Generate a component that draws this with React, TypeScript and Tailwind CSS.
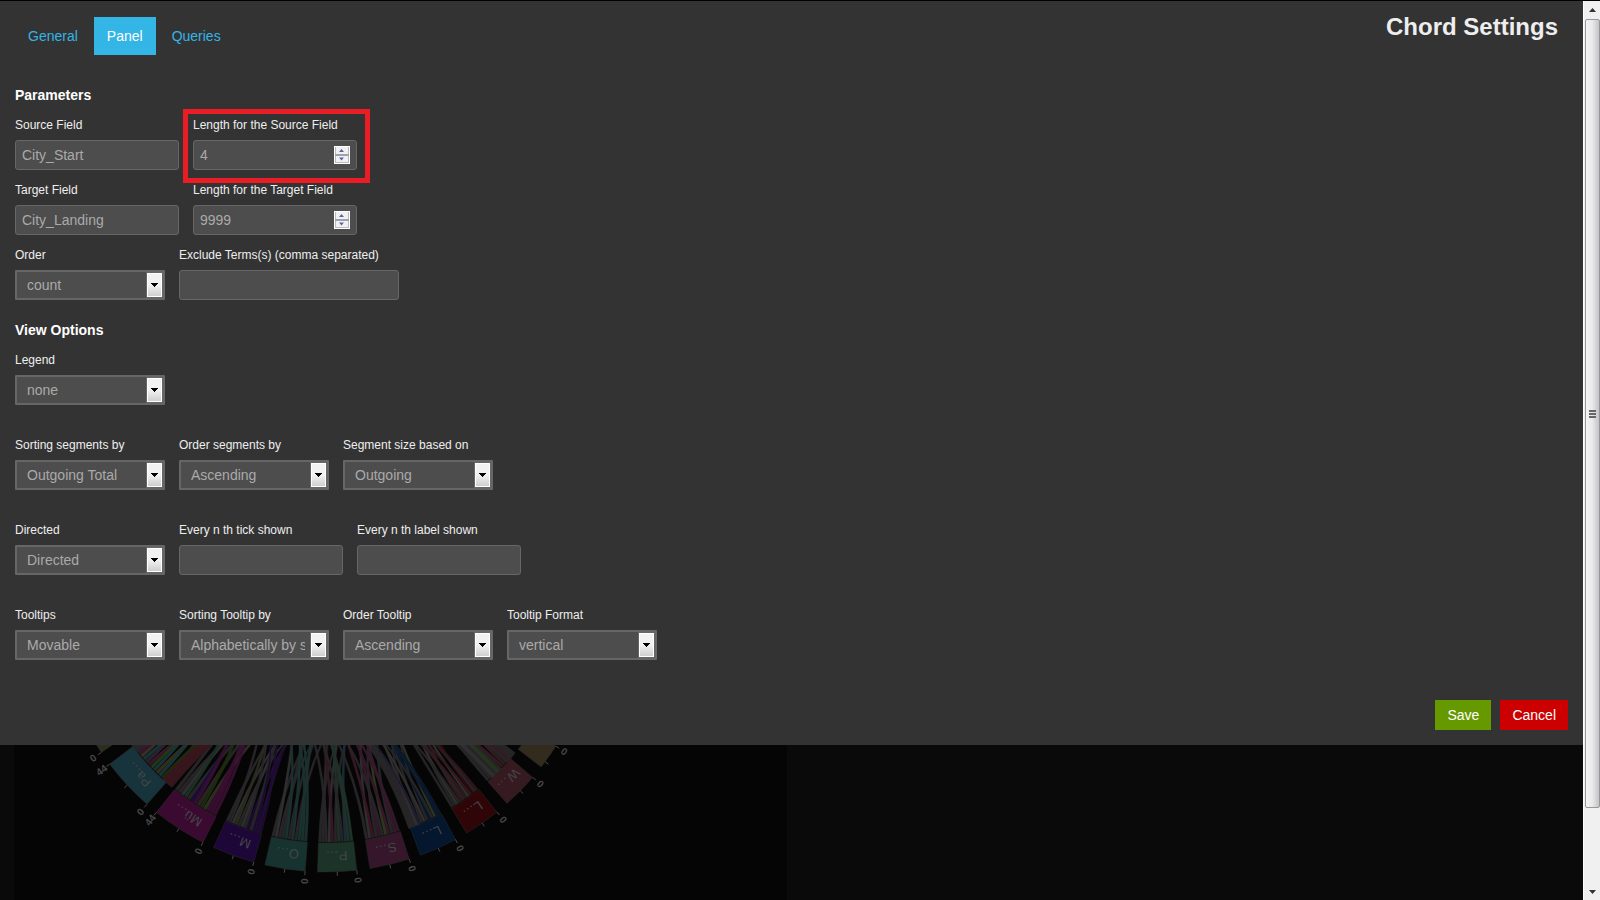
import React, { useId } from "react";

const CX = 326.5;
const CY = 600;
const OUTER = 272;
const INNER = 243;

type Segment = {
  label: string;
  from: number;
  to: number;
  fill: string;
  start?: string;
  stripes: string[];
};

const G = "#262426";
const H = "#302f30";

const segments: Segment[] = [
  { label: "", from: 155, to: 145.9, fill: "#2b2f1d", stripes: [] },
  { label: "Pa…", from: 142.9, to: 131.3, fill: "#17333b", start: "44", stripes: [G, H, "#3c1230", "#3a2f24", "#17333b", G, "#3c1230", "#1d3a10", "#17333b", "#332f16", "#17333b", "#1d2a06", "#1d2a06"] },
  { label: "Mü…", from: 128.7, to: 117, fill: "#3b0a31", start: "44", stripes: [G, G, H, "#183024", G, "#1c0a3c", "#3b0a31", G, "#1d2a06", "#2b2f1d", "#3b0a31", "#3b0a31", "#3b0a31"] },
  { label: "M…", from: 114.5, to: 105.5, fill: "#1d0638", stripes: [G, G, H, "#2c2b1b", G, H, G, "#1d0638", G, "#1d0638", "#1d0638", "#1d0638"] },
  { label: "O…", from: 103.1, to: 94.5, fill: "#16332f", stripes: [G, H, G, G, "#16332f", G, "#16332f", G, "#16332f", "#16332f", "#16332f"] },
  { label: "P…", from: 91.9, to: 83.6, fill: "#1c3328", stripes: [G, G, G, H, "#3a1424", G, "#1c3328", G, "#162c38", "#1c3328", "#1c3328"] },
  { label: "S…", from: 80.8, to: 72.3, fill: "#36162a", stripes: [G, H, "#3a1424", G, "#36162a", G, "#2f361d", "#36162a", G, "#36162a", "#36162a"] },
  { label: "L…", from: 69.8, to: 61.7, fill: "#04172f", stripes: [G, G, H, "#1c1b30", G, H, G, "#04172f", G, "#2b3420", "#04172f", "#04172f"] },
  { label: "L…", from: 59, to: 51.2, fill: "#2f0508", stripes: [G, G, H, G, "#36161c", G, "#36161c", H, "#36161c", "#2f0508", G, "#36101a"] },
  { label: "W…", from: 48.4, to: 40.7, fill: "#351a20", stripes: [G, G, H, G, "#1d3a10", G, "#351a20", "#351a20", G, "#351a20"] },
  { label: "", from: 37.9, to: 32.5, fill: "#332b1e", stripes: [] },
];

function point(angle: number, radius: number): [number, number] {
  const a = (angle * Math.PI) / 180;
  return [CX + radius * Math.cos(a), CY + radius * Math.sin(a)];
}

function at(angle: number, radius: number) {
  return point(angle, radius)
    .map((v) => v.toFixed(1))
    .join(" ");
}

function segmentPath(s: Segment) {
  return `M${at(s.from, OUTER)}A${OUTER} ${OUTER} 0 0 0 ${at(s.to, OUTER)}L${at(s.to, INNER)}A${INNER} ${INNER} 0 0 1 ${at(s.from, INNER)}Z`;
}

function ribbonPath(a: number, b: number, target: number) {
  return `M${at(a, INNER - 1)}Q${CX} ${CY} ${at(target, INNER)}A${INNER} ${INNER} 0 0 1 ${at(target + 3, INNER)}Q${CX} ${CY} ${at(b, INNER - 1)}Z`;
}

function Ribbons({ segment, index }: { segment: Segment; index: number }) {
  const n = segment.stripes.length;
  const step = (segment.from - segment.to) / Math.max(n, 1);
  const middle = (segment.from + segment.to) / 2 + 180;
  return (
    <g>
      {segment.stripes.map((color, i) => {
        const a = segment.from - i * step;
        const scatter = (((i * 61 + index * 17) % 100) - 50) * 2.2;
        const target =
          i === n - 1 ? middle - 70 : middle + scatter + (0.5 - i / n) * 60;
        return (
          <path
            key={i}
            d={ribbonPath(a, a - step * 0.85, target)}
            fill={color}
            stroke={H}
            strokeWidth={0.3}
          />
        );
      })}
    </g>
  );
}

function Tick({ angle, label }: { angle: number; label?: string }) {
  const [x, y] = point(angle, OUTER + 10);
  const [x1, y1] = point(angle, OUTER);
  const [x2, y2] = point(angle, OUTER + 4);
  return (
    <g>
      <line x1={x1} y1={y1} x2={x2} y2={y2} stroke="#4a4a4a" />
      {label && (
        <text
          x={x}
          y={y}
          fontSize={10}
          fontWeight={700}
          fill="#484848"
          textAnchor="middle"
          dominantBaseline="central"
          transform={`rotate(${angle > 90 ? angle + 180 : angle} ${x} ${y})`}
        >
          {label}
        </text>
      )}
    </g>
  );
}

function ChordChart() {
  return (
    <svg
      className="block h-[155px] w-[787px] font-['Liberation_Sans',sans-serif]"
      viewBox="0 745 787 155"
      role="img"
      aria-label="Chord chart"
    >
      <rect x={14} y={745} width={773} height={155} fill="#050505" />
      {segments.map((s, i) => (
        <Ribbons key={i} segment={s} index={i} />
      ))}
      {segments.map((s, i) => {
        const mid = (s.from + s.to) / 2;
        const [tx, ty] = point(mid, 256);
        return (
          <g key={i}>
            <path d={segmentPath(s)} fill={s.fill} stroke="#2b2b2b" strokeWidth={0.5} />
            <Tick angle={s.to} label="0" />
            {s.label && <Tick angle={mid} />}
            {s.start && <Tick angle={s.from} label={s.start} />}
            {s.label && (
              <text
                x={tx}
                y={ty}
                fontSize={13}
                fill="#454548"
                textAnchor="middle"
                dominantBaseline="central"
                transform={`rotate(${mid + 90} ${tx} ${ty})`}
              >
                {s.label}
              </text>
            )}
          </g>
        );
      })}
      <Tick angle={36.5} />
    </svg>
  );
}

const labelClass = "mb-[5px] block text-xs leading-5 text-[#eeeeee]";
const inputClass =
  "block h-[30px] rounded-[3px] border border-[#666666] bg-[#4d4d4d] px-1.5 text-sm text-[#aaaaaa] outline-none";

function TextField({ label, value = "", wide = false }: { label: string; value?: string; wide?: boolean }) {
  const id = useId();
  return (
    <div>
      <label htmlFor={id} className={labelClass}>{label}</label>
      <input id={id} type="text" defaultValue={value} className={`${inputClass} ${wide ? "w-[220px]" : "w-[164px]"}`} />
    </div>
  );
}

function NumberField({ label, value, highlighted = false }: { label: string; value: number; highlighted?: boolean }) {
  const id = useId();
  return (
    <div className="relative">
      <label htmlFor={id} className={labelClass}>{label}</label>
      <div className="relative">
        <input
          id={id}
          type="number"
          defaultValue={value}
          className={`${inputClass} w-[164px] [appearance:textfield] [&::-webkit-inner-spin-button]:appearance-none`}
        />
        <svg className="pointer-events-none absolute top-1.5 right-[7px] h-[18px] w-4" viewBox="0 0 16 18" aria-hidden="true">
          <rect width="16" height="18" fill="#fff" />
          <path d="M1 1h14v16H1z" fill="#b9bbc0" />
          <path d="M2 1h12v7H2zM2 10h12v6H2z" fill="#f0f0f2" />
          <path d="M1 9h14" stroke="#a0a2aa" strokeWidth="2" />
          <path d="M5 6l2.5-3L10 6zM5 11.500h5l-2.500 3z" fill="#5666a4" />
        </svg>
      </div>
      {highlighted && (
        <div className="pointer-events-none absolute -top-1.5 -right-[13px] -bottom-[13px] -left-2.5 border-5 border-[#ea1c24]" />
      )}
    </div>
  );
}

function SelectField({ label, value }: { label: string; value: string }) {
  const id = useId();
  return (
    <div>
      <label htmlFor={id} className={labelClass}>{label}</label>
      <div className="relative">
        <select
          id={id}
          defaultValue={value}
          className="block h-[30px] w-[150px] appearance-none overflow-hidden rounded-[1px] border-2 border-[#666666] bg-[#4d4d4d] pr-[22px] pl-2.5 text-sm text-[#aaaaaa] outline-none"
        >
          <option>{value}</option>
        </select>
        <span className="pointer-events-none absolute top-0.5 right-0.5 flex h-[26px] w-[17px] items-center justify-center border border-[#666666] bg-[#666666]">
          <span className="flex h-6 w-[15px] items-center justify-center border border-white bg-linear-to-b from-[#f2f2f2] from-50% to-[#cfcfcf]">
            <svg className="h-1 w-[7px]" viewBox="0 0 7 4" aria-hidden="true">
              <path d="M0 0h7v1H6v1H5v1H4v1H3V3H2V2H1V1H0z" fill="#000" />
            </svg>
          </span>
        </span>
      </div>
    </div>
  );
}

function Row({ children }: { children: React.ReactNode }) {
  return <div className="flex gap-3.5">{children}</div>;
}

function ScrollBar() {
  return (
    <div className="flex w-[17px] flex-col items-center border-l border-white bg-[#f0f0f0]" aria-hidden="true">
      <div className="flex h-[18px] items-center">
        <svg className="h-1 w-[7px]" viewBox="0 0 7 4"><path d="M3.500 0L7 4H0z" fill="#333" /></svg>
      </div>
      <div className="flex h-[789px] w-[15px] flex-col items-center justify-center gap-px rounded-[2px] border border-[#979797] bg-linear-to-r from-[#f5f5f5] via-[#e8e8ea] to-[#c4c4c8]">
        <span className="h-0.5 w-[7px] bg-[#666]" />
        <span className="h-0.5 w-[7px] bg-[#666]" />
        <span className="h-0.5 w-[7px] bg-[#666]" />
      </div>
      <div className="flex flex-1 flex-col justify-end pb-1.5">
        <svg className="h-1 w-[7px]" viewBox="0 0 7 4"><path d="M0 0h7L3.500 4z" fill="#333" /></svg>
      </div>
    </div>
  );
}

export default function App() {
  return (
    <div className="flex min-h-screen border-t border-black bg-[#0a0a0a] font-['Liberation_Sans',Arial,sans-serif]">
      <div className="flex min-w-0 flex-1 flex-col">
        <main className="bg-[#333333] px-[15px] pb-[15px]">
          <header className="flex items-start justify-between pt-4">
            <nav className="flex gap-[3px] text-sm leading-[38px] text-[#33b5e5]">
              <a href="#general" className="px-[13px]">General</a>
              <a href="#panel" className="bg-[#33b5e5] px-[13px] text-white" aria-current="page">Panel</a>
              <a href="#queries" className="px-[13px]">Queries</a>
            </nav>
            <h1 className="mr-2.5 -mt-1 text-2xl leading-7 font-bold text-[#eeeeee]">Chord Settings</h1>
          </header>

          <section className="mt-[30px]">
            <h2 className="mb-2.5 text-sm leading-5 font-bold text-white">Parameters</h2>
            <div className="flex flex-col gap-2.5">
              <Row>
                <TextField label="Source Field" value="City_Start" />
                <NumberField label="Length for the Source Field" value={4} highlighted />
              </Row>
              <Row>
                <TextField label="Target Field" value="City_Landing" />
                <NumberField label="Length for the Target Field" value={9999} />
              </Row>
              <Row>
                <SelectField label="Order" value="count" />
                <TextField label="Exclude Terms(s) (comma separated)" wide />
              </Row>
            </div>
          </section>

          <section className="mt-5">
            <h2 className="mb-2.5 text-sm leading-5 font-bold text-white">View Options</h2>
            <div className="flex flex-col gap-[30px]">
              <Row>
                <SelectField label="Legend" value="none" />
              </Row>
              <Row>
                <SelectField label="Sorting segments by" value="Outgoing Total" />
                <SelectField label="Order segments by" value="Ascending" />
                <SelectField label="Segment size based on" value="Outgoing" />
              </Row>
              <Row>
                <SelectField label="Directed" value="Directed" />
                <TextField label="Every n th tick shown" />
                <TextField label="Every n th label shown" />
              </Row>
              <Row>
                <SelectField label="Tooltips" value="Movable" />
                <SelectField label="Sorting Tooltip by" value="Alphabetically by source" />
                <SelectField label="Order Tooltip" value="Ascending" />
                <SelectField label="Tooltip Format" value="vertical" />
              </Row>
            </div>
          </section>

          <footer className="mt-10 flex justify-end gap-[9px] text-sm leading-[30px] text-white">
            <button type="button" className="bg-[#669900] px-3">Save</button>
            <button type="button" className="bg-[#cc0000] px-3">Cancel</button>
          </footer>
        </main>
        <ChordChart />
      </div>
      <ScrollBar />
    </div>
  );
}
